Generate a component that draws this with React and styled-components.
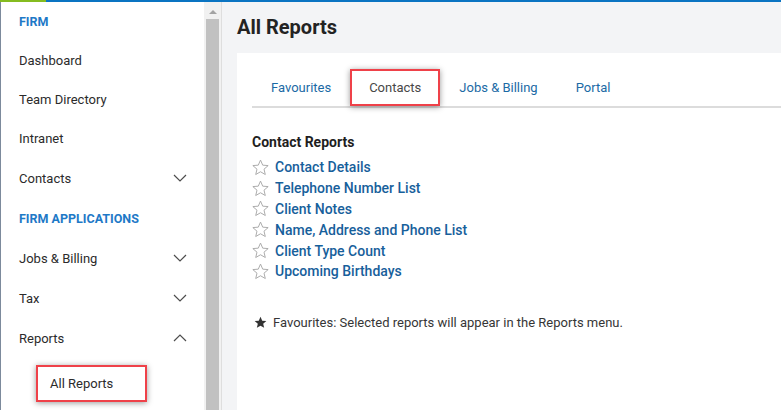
import React from 'react';
import styled, { createGlobalStyle, css } from 'styled-components';

const GlobalStyle = createGlobalStyle`
  html, body {
    margin: 0;
    padding: 0;
    height: 100%;
    overflow: hidden;
  }
  body {
    font-family: Roboto, "Open Sans", sans-serif;
    color: #2b2b2b;
    background: #f3f4f6;
  }
`;

const Page = styled.div`
  display: flex;
  flex-direction: column;
  height: 410px;
`;

const TopStrip = styled.div`
  display: flex;
  height: 2px;
  flex: none;
`;

const StripPart = styled.div`
  height: 100%;
  ${props =>
    props.green
      ? css`
          width: 46px;
          background: #85bc20;
        `
      : css`
          flex: 1;
          background: #0a74c2;
        `}
`;

const Body = styled.div`
  display: flex;
  flex: 1;
  min-height: 0;
`;

const Sidebar = styled.nav`
  width: 203px;
  flex: none;
  background: #fff;
  border-left: 1px solid #7c8a9c;
  display: flex;
  flex-direction: column;
`;

const NavRow = styled.div`
  display: flex;
  align-items: center;
  justify-content: space-between;
  height: ${props => props.h || 39}px;
  padding: 0 17px 0 18px;
  font-size: 13px;
  color: #2b2b2b;
  ${props =>
    props.heading &&
    css`
      font-size: 12.5px;
      font-weight: 700;
      color: #1e79c7;
    `}
`;

const SubItem = styled.div`
  display: flex;
  align-items: center;
  height: 37px;
  margin: 7px 0 0 35px;
  width: 111px;
  box-sizing: border-box;
  padding-left: 14px;
  font-size: 13px;
  color: #2b2b2b;
  box-shadow: inset 0 0 0 2px #ef4149, 0 1px 6px rgba(0, 0, 0, 0.4);
`;

const Scrollbar = styled.div`
  width: 17px;
  flex: none;
  background: #f1f1f1;
  border-right: 1px solid #dedede;
  display: flex;
  flex-direction: column;
  align-items: center;
`;

const ArrowUp = styled.div`
  width: 0;
  height: 0;
  margin: 8px 0 5px;
  border-left: 4px solid transparent;
  border-right: 4px solid transparent;
  border-bottom: 4px solid #a3a3a3;
`;

const Thumb = styled.div`
  width: 13px;
  flex: 1;
  background: #c1c1c1;
`;

const Main = styled.main`
  flex: 1;
  min-width: 0;
  padding: 12px 0 0 15px;
  display: flex;
  flex-direction: column;
`;

const Title = styled.h1`
  margin: 0 0 13px;
  font-size: 20px;
  line-height: 26px;
  font-weight: 700;
  color: #232323;
`;

const Card = styled.section`
  flex: 1;
  background: #fff;
  padding: 16px 0 0 15px;
`;

const Tabs = styled.div`
  display: flex;
  border-bottom: 2px solid #dcdcdc;
`;

const Tab = styled.div`
  height: 37px;
  display: flex;
  align-items: center;
  padding: 0 19px;
  font-size: 13px;
  color: ${props => (props.active ? '#474747' : '#1b6aa5')};
  ${props =>
    props.highlighted &&
    css`
      box-shadow: inset 0 0 0 2px #ef4149, 0 1px 6px rgba(0, 0, 0, 0.4);
    `}
`;

const SectionTitle = styled.h2`
  margin: 24px 0 5px;
  font-size: 14px;
  line-height: 20px;
  font-weight: 700;
  color: #1f1f1f;
`;

const ReportList = styled.ul`
  list-style: none;
  margin: 0;
  padding: 0;
`;

const ReportItem = styled.li`
  display: flex;
  align-items: center;
  height: 20.8px;
  gap: 6px;
  font-size: 14px;
  font-weight: 500;
  color: #17609b;
`;

const Note = styled.p`
  margin: 33px 0 0 2px;
  display: flex;
  align-items: center;
  gap: 6px;
  font-size: 13px;
  color: #363636;
`;

function Chevron({ up }) {
  return (
    <svg width="14" height="8" viewBox="0 0 14 8">
      <polyline
        points={up ? '1,7 7,1 13,7' : '1,1 7,7 13,1'}
        fill="none"
        stroke="#4d4d4d"
        strokeWidth="1.2"
      />
    </svg>
  );
}

function Star({ filled }) {
  const pts = '8,1 10.1,5.8 15.2,6.2 11.3,9.6 12.5,14.6 8,12 3.5,14.6 4.7,9.6 0.8,6.2 5.9,5.8';
  return filled ? (
    <svg width="13" height="13" viewBox="0 0 16 16">
      <polygon points={pts} fill="#333" />
    </svg>
  ) : (
    <svg width="17" height="17" viewBox="0 0 16 16">
      <polygon points={pts} fill="none" stroke="#a8a8a8" strokeWidth="0.9" strokeLinejoin="round" />
    </svg>
  );
}

const nav = [
  { label: 'FIRM', heading: true },
  { label: 'Dashboard' },
  { label: 'Team Directory' },
  { label: 'Intranet' },
  { label: 'Contacts', chevron: 'down', h: 40 },
  { label: 'FIRM APPLICATIONS', heading: true, h: 40 },
  { label: 'Jobs & Billing', chevron: 'down', h: 40 },
  { label: 'Tax', chevron: 'down', h: 40 },
  { label: 'Reports', chevron: 'up', h: 40 },
];

const tabs = ['Favourites', 'Contacts', 'Jobs & Billing', 'Portal'];

const reports = [
  'Contact Details',
  'Telephone Number List',
  'Client Notes',
  'Name, Address and Phone List',
  'Client Type Count',
  'Upcoming Birthdays',
];

export default function App() {
  return (
    <Page>
      <GlobalStyle />
      <TopStrip>
        <StripPart green />
        <StripPart />
      </TopStrip>
      <Body>
        <Sidebar>
          {nav.map(item => (
            <NavRow key={item.label} heading={item.heading} h={item.h}>
              <span>{item.label}</span>
              {item.chevron && <Chevron up={item.chevron === 'up'} />}
            </NavRow>
          ))}
          <SubItem>All Reports</SubItem>
        </Sidebar>
        <Scrollbar>
          <ArrowUp />
          <Thumb />
        </Scrollbar>
        <Main>
          <Title>All Reports</Title>
          <Card>
            <Tabs>
              {tabs.map(t => (
                <Tab key={t} active={t === 'Contacts'} highlighted={t === 'Contacts'}>
                  {t}
                </Tab>
              ))}
            </Tabs>
            <SectionTitle>Contact Reports</SectionTitle>
            <ReportList>
              {reports.map(r => (
                <ReportItem key={r}>
                  <Star />
                  {r}
                </ReportItem>
              ))}
            </ReportList>
            <Note>
              <Star filled />
              Favourites: Selected reports will appear in the Reports menu.
            </Note>
          </Card>
        </Main>
      </Body>
    </Page>
  );
}
